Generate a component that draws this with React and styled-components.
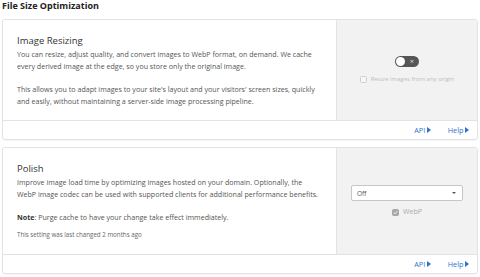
import React from "react";
import styled, { createGlobalStyle } from "styled-components";

const Global = createGlobalStyle`
  html, body { margin: 0; padding: 0; background: #ffffff; }
  body { font-family: "Open Sans", "Liberation Sans", sans-serif; color: #4a4a4a; }
`;

const Page = styled.div`
  width: 480px;
  padding: 0 2px;
  box-sizing: border-box;
`;

const Title = styled.h2`
  margin: 0;
  height: 19px;
  font-size: 9px;
  line-height: 12px;
  font-weight: 700;
  color: #222;
`;

const Card = styled.section`
  border: 1px solid #e3e3e3;
  border-radius: 3px;
  box-shadow: 0 1px 1px rgba(0, 0, 0, 0.04);
  background: #fff;
  margin-bottom: 7px;
  overflow: hidden;
`;

const Body = styled.div`
  display: grid;
  grid-template-columns: 333px 1fr;
`;

const Content = styled.div`
  padding: 14px 17px ${(p) => p.$pb || 13}px 14px;
`;

const Heading = styled.h3`
  margin: 0;
  font-size: 9.5px;
  line-height: 14px;
  font-weight: 400;
  color: #333;
`;

const Text = styled.p`
  margin: 0 0 ${(p) => p.$mb ?? 11}px;
  font-size: 7.1px;
  line-height: 12px;
  color: #555;
  &:last-child { margin-bottom: 0; }
  b { font-weight: 700; color: #333; }
`;

const Meta = styled.p`
  margin: 0;
  font-size: 6.2px;
  line-height: 10px;
  color: #666;
`;

const Panel = styled.div`
  background: #f2f2f2;
  border-left: 1px solid #e3e3e3;
  display: flex;
  flex-direction: column;
  align-items: center;
  justify-content: center;
  gap: ${(p) => p.$gap}px;
`;

const Toggle = styled.span`
  position: relative;
  display: inline-flex;
  align-items: center;
  justify-content: flex-end;
  width: 24px;
  height: 11px;
  border-radius: 6px;
  background: #555;
  box-sizing: border-box;
  padding-right: 5px;
  color: #ddd;
  font-size: 7.5px;
  line-height: 1;
`;

const Knob = styled.span`
  position: absolute;
  left: 1px;
  top: 1px;
  width: 9px;
  height: 9px;
  border-radius: 50%;
  background: #fff;
`;

const CheckRow = styled.label`
  display: flex;
  align-items: center;
  gap: 4px;
  font-size: ${(p) => p.$size || 6}px;
  line-height: 10px;
  color: ${(p) => (p.$dim ? "#bdbdbd" : "#aaa")};
`;

const Box = styled.span`
  display: inline-flex;
  align-items: center;
  justify-content: center;
  width: 7px;
  height: 7px;
  box-sizing: border-box;
  border-radius: 1.5px;
  border: 1px solid ${(p) => (p.$checked ? "#a8a8a8" : "#cfcfcf")};
  background: ${(p) => (p.$checked ? "#a8a8a8" : "#f7f7f7")};
`;

const Select = styled.div`
  width: 112px;
  height: 16px;
  box-sizing: border-box;
  background: #fff;
  border: 1px solid #c6c6c6;
  border-radius: 2px;
  display: flex;
  align-items: center;
  justify-content: space-between;
  padding: 0 6px 0 5px;
  font-size: 6.5px;
  color: #555;
`;

const Caret = styled.span`
  width: 0;
  height: 0;
  border-left: 2.5px solid transparent;
  border-right: 2.5px solid transparent;
  border-top: 2.5px solid #555;
`;

const Footer = styled.div`
  height: 18px;
  border-top: 1px solid #e3e3e3;
  display: flex;
  align-items: center;
  justify-content: flex-end;
  gap: 17px;
  padding-right: 8px;
`;

const Link = styled.a`
  display: inline-flex;
  align-items: center;
  gap: 1.5px;
  font-size: 7.3px;
  color: #2f72cf;
  text-decoration: none;
`;

const Arrow = styled.span`
  width: 0;
  height: 0;
  border-top: 3.5px solid transparent;
  border-bottom: 3.5px solid transparent;
  border-left: 4px solid #2f72cf;
`;

function Check() {
  return (
    <svg width="5" height="5" viewBox="0 0 10 10">
      <path d="M1.5 5.2 L4 7.6 L8.6 2.4" fill="none" stroke="#fff" strokeWidth="1.8" />
    </svg>
  );
}

function Links() {
  return (
    <Footer>
      <Link href="#">API<Arrow /></Link>
      <Link href="#">Help<Arrow /></Link>
    </Footer>
  );
}

export default function App() {
  return (
    <Page>
      <Global />
      <Title>File Size Optimization</Title>
      <Card>
        <Body>
          <Content $pb={13}>
            <Heading>Image Resizing</Heading>
            <Text>
              You can resize, adjust quality, and convert images to WebP format, on demand. We cache every derived image at the edge, so you store only the original image.
            </Text>
            <Text>
              This allows you to adapt images to your site's layout and your visitors' screen sizes, quickly and easily, without maintaining a server-side image processing pipeline.
            </Text>
          </Content>
          <Panel $gap={7}>
            <Toggle>
              <Knob />×
            </Toggle>
            <CheckRow $dim>
              <Box />
              Resize images from any origin
            </CheckRow>
          </Panel>
        </Body>
        <Links />
      </Card>
      <Card>
        <Body>
          <Content $pb={14}>
            <Heading>Polish</Heading>
            <Text>
              Improve image load time by optimizing images hosted on your domain. Optionally, the WebP image codec can be used with supported clients for additional performance benefits.
            </Text>
            <Text $mb={7}>
              <b>Note</b>: Purge cache to have your change take effect immediately.
            </Text>
            <Meta>This setting was last changed 2 months ago</Meta>
          </Content>
          <Panel $gap={6}>
            <Select>
              Off
              <Caret />
            </Select>
            <CheckRow $size={7}>
              <Box $checked>
                <Check />
              </Box>
              WebP
            </CheckRow>
          </Panel>
        </Body>
        <Links />
      </Card>
    </Page>
  );
}
